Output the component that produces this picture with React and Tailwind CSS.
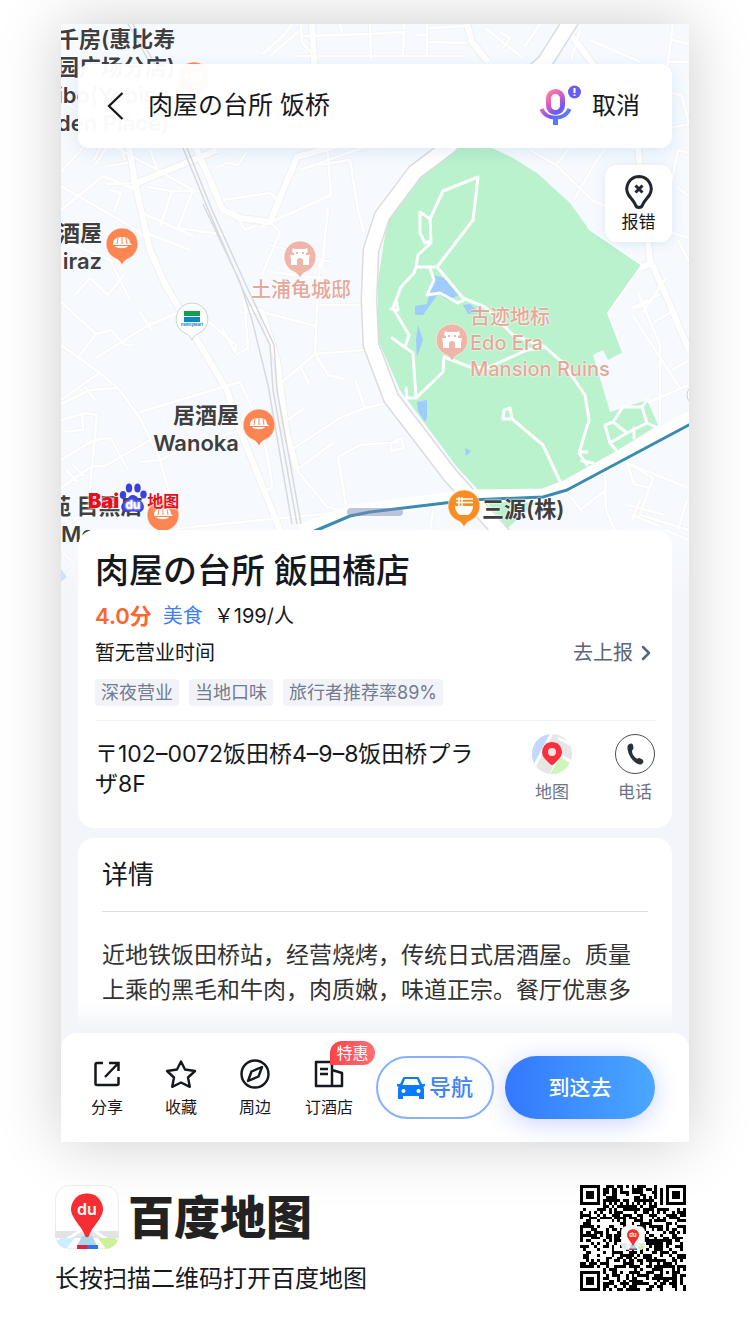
import React from 'react';
import { ChevronRight } from 'lucide-react';

// All map geometry is in one 628x576 space starting at (61, 24)
const THIN_ROADS = [
    'M61 118 L150 166 L193 190 L178 228 L226 235',
    'M61 60 L96 102 L132 70', 'M61 172 L90 140 L78 128', 'M61 186 L130 226 L150 240', 'M61 210 L103 176 L137 190',
    'M95 165 L112 140', 'M107 184 L137 183', 'M107 166 L128 163', 'M110 190 L121 193 L114 212',
    'M61 240 L110 260 L130 300', 'M76 294 L90 278 L108 295 L124 275', 'M96 358 L147 326 L180 312 L200 310',
    'M61 302 L96 334 L78 358 M96 334 L111 330 L125 345 L132 345', 'M61 345 L101 374 L118 388 L140 418 L160 460 L180 530',
    'M61 400 L98 374', 'M61 404 L90 390 L118 388 M85 387 L97 402', 'M61 420 L85 413 L97 415 L92 466 L105 466 L150 440',
    'M61 432 L83 430 L82 413 M61 460 L94 440 M61 488 L92 466 M66 470 L78 482 M72 464 L84 476 M94 440 L110 438',
    'M92 466 L88 510 L61 530', 'M140 412 L180 400 L240 382 M222 328 L235 352 L236 345 L207 320', 'M139 311 L153 332',
    'M236 355 L248 348 L244 300', 'M240 382 L262 430 L270 470 L272 488 L266 490', 'M110 437 L128 470 M140 462 L160 460 L200 442 L240 430',
    'M148 187 L172 191 L160 227 M172 191 L200 191', 'M140 212 L193 236 M144 232 L190 250', 'M223 200 L270 193 L280 202',
    'M270 222 L280 232 L262 275', 'M327 145 L331 195 L260 227', 'M217 167 L227 163 L238 165 L247 152', 'M233 210 L245 230 L255 226',
    'M318 165 L350 160 L358 210 L364 233', 'M300 170 L370 145 L430 140', 'M328 207 L322 268', 'M270 245 L330 262 M320 260 L317 305',
    'M270 272 L322 278 M262 285 L300 292', 'M243 312 L262 312 L316 326', 'M319 305 L360 305', 'M317 305 L315 354 L364 350 M315 354 L281 383',
    'M315 354 L328 375 L344 379 M300 366 L309 383', 'M355 380 L365 408 L382 404 L399 402', 'M365 408 L340 418 L288 452 M288 420 L304 408',
    'M399 442 L360 445 L338 457 L346 505 M297 470 L333 443', 'M297 470 L327 507 L350 512', 'M391 443 L401 438 L404 448 L391 451 Z',
    'M262 54 L284 35 L292 24 M270 56 L300 30', 'M293 56 L467 56', 'M301 24 L302 42 L317 60', 'M302 36 L370 34 L404 32 L403 56',
    'M340 24 L342 33 M370 24 L371 60 M404 24 L404 30', 'M427 24 L427 56 M417 35 L427 35 M429 42 L467 43 M429 28 L467 26',
    'M485 28 L523 58 M500 32 L510 38 L503 48', 'M540 24 L525 46', 'M580 30 L571 60 M590 40 L640 62', 'M673 24 L668 62 L689 62 M672 40 L689 44',
    'M668 62 L664 90 L682 96 L689 125', 'M670 128 L689 124', 'M530 150 L556 165 L592 200 L630 218 M574 200 L592 168 L604 150', 'M556 165 L568 150',
    'M61 74 L61 100 L110 128 L94 160', 'M150 150 L158 170 M118 140 L125 160', 'M672 180 L678 150 L689 153 M678 188 L689 196',
    'M664 230 L689 238 M678 240 L689 262', 'M633 316 L680 388 M643 312 L666 278 M637 308 L660 294 M654 322 L675 310',
    'M638 293 L660 345 L660 425 M648 300 L632 308', 'M645 404 L689 385 M672 370 L689 360', 'M627 463 L634 484 L650 488 L653 478 L627 463 L689 488',
    'M653 478 L640 515 L689 530', 'M615 530 L606 510 L605 490 M604 470 L606 490 L580 510', 'M628 505 L665 515 M632 515 L660 526 M640 500 L632 520',
    'M687 500 L678 530 M665 530 L689 540', 'M61 550 L75 565 L61 585', 'M430 530 L435 500', 'M160 530 L345 512', 'M572 498 L582 512',
];

const MID_ROADS = [
    'M128 140 L135 183 L150 250 L165 284 L193 333 L227 390 L240 430 L280 530',
    'M137 183 L217 150', 'M196 148 L223 210 L240 218 L270 222 L297 157 L350 142', 'M246 308 L262 312 L277 360 L286 430 L297 470',
    'M467 24 L472 42 L488 62', 'M572 36 L612 90 L638 148 L650 260 L668 300 L689 350', 'M312 24 L314 60 L312 90', 'M640 268 L654 262',
];

const RAILS = [
    'M128 24 L150 63 L183 148 L207 207 L243 290 L270 345 L273 390 L297 524',
    'M133 24 L154 63 L187 148 L212 210 L246 285 L274 345 L277 390 L301 524',
    'M203 204 L240 282 L252 320 L268 385 L292 524',
];

const PARK_PATHS = [
    'M478 177 L443 191 L430 219 L420 212 L420 233 L425 243 L431 241 L430 219',
    'M478 177 L473 220 L437 267 L416 267 L418 255 L431 243', 'M416 267 L414 273 L401 287 L393 308 L409 335 L405 347 M396 300 L398 310 L391 309',
    'M430 268 L434 280 L427 295 L440 293 L458 303 L466 299', 'M437 267 L463 298 L485 307 L513 335 L545 347 L563 363 L585 395 L589 420 L579 453 L587 465 M582 452 L587 452 M582 461 L593 463',
    'M392 338 L413 353 L416 398 L407 398 L406 388 M416 398 L443 372 L444 357 L470 367 L487 368 L527 350 L545 347',
    'M563 488 L543 445 L512 419 L510 408 L504 410 L503 419 L512 419', 'M605 425 L613 422 L623 407 L642 407 L647 423 L627 433 L613 422 M605 425 L610 443 L627 433 M610 443 L616 450 M634 428 L634 438 M642 407 L647 400 M647 423 L658 428',
];

const DARK_LABEL = 'absolute whitespace-nowrap text-[22px] leading-[28px] font-semibold text-[#3f3f3f] [text-shadow:0_0_2px_#fff,0_0_2px_#fff]';
const PINK_LABEL = 'absolute whitespace-nowrap text-[20px] leading-[26px] font-medium text-[#e6a799] [text-shadow:0_0_2px_#fff,0_0_2px_#fff]';

const Pin = ({ kind, className }) => {
    const fill = kind === 'landmark' ? '#efb5a8' : kind === 'noodle' ? '#fb8c22' : kind === 'shop' ? '#fff' : '#fd8552';
    return (
        <svg viewBox="0 0 34 40" className={`absolute h-10 w-[34px] ${className}`} aria-hidden="true">
            <path
                d="M17 1 A16 16 0 0 1 22.5 32 C20 33 18.5 35 17 38 C15.500 35 14 33 11.500 32 A16 16 0 0 1 17 1 Z"
                fill={fill}
                stroke={kind === 'shop' ? '#cfd0d2' : '#fff'}
                strokeOpacity={kind === 'shop' ? 1 : 0.5}
            />
            {kind === 'food' && (
                <g>
                    <path d="M8 17 C8 12 12 10 17 10 C22 10 25 12 25 16 L27 18 L8 18 Z" fill="#fff" />
                    <path d="M13 11 L12 17 M17 10 L17 17 M21 11 L22 17" stroke="#fd8552" fill="none" />
                    <path d="M10 19 H23 C21 22 12 22 10 19 Z" fill="#fff" />
                </g>
            )}
            {kind === 'landmark' && (
                <path d="M10 8 L12 9 H22 L24 8 L25 12 L23 13 V15 L27 15 L26 19 V25 H20 V21 A3 3 0 0 0 14 21 V25 H8 V19 L7 15 L11 15 V13 L9 12 Z M13 12 V14 H15 V12 Z M19 12 V14 H21 V12 Z" fill="#fff" fillRule="evenodd" />
            )}
            {kind === 'noodle' && (
                <g fill="none" stroke="#fff">
                    <path d="M8 17 H26 C26 21 24 24 21 26 H13 C10 24 8 21 8 17 Z" fill="#fff" stroke="none" />
                    <path d="M9 10 H26 M9 13.500 H26 M12 8 V17 M15 8 V17" strokeWidth="1.500" />
                </g>
            )}
            {kind === 'shop' && (
                <g>
                    <rect x="9" y="9" width="16" height="5" fill="#13a04a" />
                    <rect x="9" y="15" width="16" height="5" fill="#0a86c8" />
                    <text x="17" y="24" textAnchor="middle" fontSize="4" fontWeight="700" fill="#0a86c8">FamilyMart</text>
                </g>
            )}
        </svg>
    );
};

const MapCanvas = () => (
    <svg viewBox="61 24 628 576" preserveAspectRatio="xMidYMin slice" className="absolute inset-x-0 top-0 h-[576px] w-full" aria-hidden="true">
        <defs>
            <linearGradient id="mapFade" x1="0" y1="0" x2="0" y2="1">
                <stop offset="0" stopColor="#f4f5fa" stopOpacity="0" />
                <stop offset="1" stopColor="#f4f5fa" />
            </linearGradient>
        </defs>
        <rect x="61" y="24" width="628" height="576" fill="#f6faff" />
        <g fill="none" strokeLinejoin="round">
            <path d={THIN_ROADS.join(' ')} stroke="#f1f3f6" strokeWidth="4" />
            <path d={MID_ROADS.join(' ')} stroke="#eef0f3" strokeWidth="8" />
            <path d={THIN_ROADS.join(' ')} stroke="#fff" strokeWidth="2.500" />
            <path d={MID_ROADS.join(' ')} stroke="#fff" strokeWidth="6" />
            <path d={RAILS.join(' ')} stroke="#d8d9dc" strokeWidth="1.500" />
        </g>
        <path
            d="M460 148 L492 148 L513 158 L537 173 L570 203 L588 228 L642 265 L608 313 L623 352 L608 360 L603 350 L593 355 L610 412 L647 400 L658 425 L613 453 L563 488 L540 496 L485 497 L457 467 L400 390 L378 340 L378 280 L387 223 L410 180 Z"
            fill="#b9f2cc"
        />
        <path d="M485 500 L535 503 L508 528 Z" fill="#b9f2cc" />
        <path d="M588 228 L642 265 L608 313 L623 352" fill="none" stroke="#fff" strokeWidth="2" />
        <path
            d="M433 275 L448 279 L459 295 L448 300 L438 294 L423 315 L415 315 L415 306 L427 304 Z M463 305 L470 304 L480 313 L468 314 Z M418 325 L423 340 L417 357 L416 340 Z M417 402 L427 400 L427 418 L425 422 L418 411 Z M465 448 L471 451 L466 456 Z"
            fill="#9fcbfd"
        />
        <path d={PARK_PATHS.join(' ')} fill="none" stroke="#fff" strokeWidth="3" strokeLinejoin="round" strokeLinecap="round" />
        <g fill="none" strokeLinejoin="round">
            <path d="M574 16 L545 62 L447 148 L415 172 L382 216 L371 250 L369 300 L371 345 L391 398 L450 475 L504 536" stroke="#dcdcde" strokeWidth="17" />
            <path d="M574 16 L545 62 L447 148 L415 172 L382 216 L371 250 L369 300 L371 345 L391 398 L450 475 L504 536" stroke="#fff" strokeWidth="14" />
            <path d="M300 531 L350 512 L470 496 L543 495 L567 486 L700 412" stroke="#fff" strokeWidth="13" />
            <path d="M310 533 L350 516 L370 512 L470 500 L543 497 L567 490 L700 419" stroke="#3a8bb0" strokeWidth="3" />
        </g>
        <circle cx="697" cy="395" r="10" fill="#fff" stroke="#cfcfd2" />
        <rect x="61" y="540" width="628" height="60" fill="url(#mapFade)" />
        <path d="M61 569 L67 577 L61 582 Z" fill="#cfe2fa" />
    </svg>
);

const MapLabels = () => (
    <div className="absolute inset-x-0 top-0 h-[518px] overflow-hidden">
        <p className={`${DARK_LABEL} -left-1 top-px`}>
            千房(惠比寿<br />园广场分店)<br />ibo(Yebisu<br />den Place)
        </p>
        <Pin kind="food" className="left-[116px] top-[37px]" />
        <p className={`${DARK_LABEL} -left-[59px] top-[195px] w-[100px] text-right`}>酒屋<br />iraz</p>
        <Pin kind="food" className="left-11 top-[203px]" />
        <Pin kind="landmark" className="left-[222px] top-[216px]" />
        <p className={`${PINK_LABEL} left-[190px] top-[253px]`}>土浦龟城邸</p>
        <Pin kind="shop" className="left-[114px] top-[278px]" />
        <Pin kind="landmark" className="left-[374px] top-[299px]" />
        <p className={`${PINK_LABEL} left-[409px] top-[280px]`}>古迹地标<br />Edo Era<br />Mansion Ruins</p>
        <p className={`${DARK_LABEL} left-[78px] top-[377px] w-[100px] text-right`}>居酒屋<br />Wanoka</p>
        <Pin kind="food" className="left-[181px] top-[384px]" />
        <Pin kind="noodle" className="left-[386px] top-[465px]" />
        <p className={`${DARK_LABEL} left-[421px] top-[471px]`}>三源(株)</p>
        <p className={`${DARK_LABEL} -left-3 top-[468px]`}>苑 目黑店<br /><span className="pl-3">Meguro</span></p>
        <Pin kind="food" className="left-[85px] top-[474px]" />
    </div>
);

const BackIcon = () => (
    <svg viewBox="0 0 18 30" className="h-[30px] w-[18px]" fill="none" stroke="#15181d" strokeWidth="2.300" aria-hidden="true">
        <path d="M16.500 2 L3 15 L16.500 28" />
    </svg>
);

const MicIcon = () => (
    <svg viewBox="0 0 44 44" className="h-11 w-11" aria-hidden="true">
        <defs>
            <linearGradient id="mic" x1="4" y1="6" x2="30" y2="36" gradientUnits="userSpaceOnUse">
                <stop offset="0" stopColor="#ff9a7a" />
                <stop offset="0.350" stopColor="#e65fc0" />
                <stop offset="0.650" stopColor="#7258f2" />
                <stop offset="1" stopColor="#4a94ff" />
            </linearGradient>
        </defs>
        <g fill="none" stroke="url(#mic)">
            <rect x="10.500" y="7.500" width="14" height="21" rx="7" strokeWidth="5" />
            <path d="M3.500 25 C8 36.500 27 36.500 31.500 25" strokeWidth="4" />
        </g>
        <rect x="15" y="34" width="5" height="7" fill="#5a78fa" />
        <circle cx="36.500" cy="8" r="6.500" fill="#6a5cf0" />
        <path d="M36.500 4 V9 M36.500 10.500 V12" stroke="#fff" strokeWidth="2" />
    </svg>
);

const BaiduLogo = () => (
    <div className="flex items-end text-[#e50f1c] [text-shadow:0_0_2px_#fff,0_0_3px_#fff]">
        <span className="text-[20px] leading-[24px] font-black">Bai</span>
        <svg viewBox="0 0 28 30" className="h-[30px] w-7" aria-hidden="true">
            <g fill="#3a3fe0">
                <ellipse cx="4" cy="12" rx="3.200" ry="4" />
                <ellipse cx="10" cy="5" rx="3.200" ry="4.500" />
                <ellipse cx="18.500" cy="5" rx="3.200" ry="4.500" />
                <ellipse cx="24.500" cy="11.500" rx="3.200" ry="4" />
                <path d="M14 12 C18 12 19 16 22 18 C26 21 26 28 21 29 C18 29.500 16 28.500 14 28.500 C12 28.500 9 29.500 6 29 C1 27 1 21 6 18 C9 16 10 12 14 12 Z" />
            </g>
            <text x="14" y="26" textAnchor="middle" fontSize="12" fontWeight="600" fill="#fff">du</text>
        </svg>
        <span className="text-[16px] leading-[24px] font-bold">地图</span>
    </div>
);

const ReportIcon = () => (
    <svg viewBox="0 0 28 34" className="h-[34px] w-7" fill="none" stroke="#22262e" strokeWidth="3" aria-hidden="true">
        <path d="M14 1.500 A12.300 12.300 0 0 1 24.500 20 C21.500 24 18.500 27 17.500 30 C16.500 33.300 11.500 33.300 10.500 30 C9.500 27 6.500 24 3.500 20 A12.300 12.300 0 0 1 14 1.500 Z" />
        <path d="M10.500 10.500 L17.500 17.500 M17.500 10.500 L10.500 17.500" />
    </svg>
);

const MapCircleIcon = () => (
    <svg viewBox="0 0 40 40" className="h-10 w-10" aria-hidden="true">
        <clipPath id="round"><circle cx="20" cy="20" r="20" /></clipPath>
        <g clipPath="url(#round)">
            <rect width="40" height="40" fill="#e6e6e8" />
            <path d="M0 0 H19 L3 31 H0 Z" fill="#c3d8fc" />
            <path d="M20 -1 L2 33 M28 22 L18 42 M27 20 L42 30 M26 4 L42 12" stroke="#fff" strokeWidth="3" fill="none" />
            <path d="M28 24 L40 31 V40 H18 Z" fill="#cdf7b8" />
        </g>
        <path d="M20 8 A10 10 0 0 1 27 25 L22 30 Q20 32 18 30 L13 25 A10 10 0 0 1 20 8 Z" fill="#f8303c" />
        <circle cx="20" cy="18" r="4" fill="#fde3e3" />
    </svg>
);

const PhoneCircleIcon = () => (
    <svg viewBox="0 0 40 40" className="h-10 w-10" aria-hidden="true">
        <circle cx="20" cy="20" r="19.500" fill="#fff" stroke="#4a4d52" />
        <path d="M13 11 C15 9 17 9 18 11 L18.500 14 C18.500 15.500 17 16 17 17 C17 20 19 22.500 21.500 24.500 C22.500 25 23.500 24 24.500 24 L27.500 25.500 C29 27 28.500 28.500 27 30 C25 31 23 30.500 21 29 C16 25.500 13 20 12.500 14.500 C12.300 13 12.500 12 13 11 Z" fill="#2a3138" />
    </svg>
);

const ShareIcon = () => (
    <svg viewBox="0 0 28 28" className="h-7 w-7" fill="none" stroke="#15181d" strokeWidth="2.500" aria-hidden="true">
        <path d="M10 3 H4 Q2.500 3 2.500 4.500 V23.500 Q2.500 25 4 25 H24 Q25.500 25 25.500 23.500 V17 M16 3 H25.500 V11 M25 3.500 L12 17" />
    </svg>
);

const StarIcon = () => (
    <svg viewBox="0 0 32 30" className="h-[30px] w-8" fill="none" stroke="#15181d" strokeWidth="2.400" strokeLinejoin="round" aria-hidden="true">
        <path d="M16 2.500 L20 10.500 L30 12 L23 18.500 L24.800 27.800 L16 23.500 L7.200 27.800 L9 18.500 L2 12 L12 10.500 Z" />
    </svg>
);

const CompassIcon = () => (
    <svg viewBox="0 0 30 30" className="h-[30px] w-[30px]" fill="none" stroke="#15181d" strokeWidth="2.400" strokeLinejoin="round" aria-hidden="true">
        <circle cx="15" cy="15" r="13.500" />
        <path d="M22 8 L18.500 17.500 L8 22 L11.500 12.500 Z" />
    </svg>
);

const HotelIcon = () => (
    <svg viewBox="0 0 30 28" className="h-7 w-[30px]" fill="none" stroke="#15181d" strokeWidth="2.500" strokeLinejoin="round" aria-hidden="true">
        <path d="M18 26 H2 V2 H18 Z M18 10 L28 13 V26 H18 M6 9 H14 M6 14 H14" />
    </svg>
);

const CarIcon = () => (
    <svg viewBox="0 0 28 24" className="h-6 w-7" aria-hidden="true">
        <path d="M6.500 1 H21.500 L25 8 H28 V10 L26.500 11 L27 13 V23 H22 V20 H6 V23 H1 V13 L1.500 11 L0 10 V8 H3 Z M8 3 L5.500 9 H22.500 L20 3 Z M6.500 13 A2 2 0 1 0 6.510 13 Z M21.500 13 A2 2 0 1 0 21.510 13 Z" fill="#0a7bff" fillRule="evenodd" />
    </svg>
);

const AppLogo = ({ className }) => (
    <svg viewBox="0 0 64 64" className={className} aria-hidden="true">
        <clipPath id="tile"><rect width="64" height="64" rx="14" /></clipPath>
        <rect x="0.500" y="0.500" width="63" height="63" rx="14" fill="#fff" stroke="#ececec" />
        <g clipPath="url(#tile)">
            <path d="M0 46 H64 V53 H0 Z" fill="#e3e3e5" />
            <path d="M28 44 L0 62 M36 44 L64 62" stroke="#fff" strokeWidth="3" />
            <path d="M6 53 H20 L11 64 H0 V57 Z" fill="#cdeefc" />
            <path d="M43 53 H60 L64 57 L56 64 H51 Z" fill="#cdf09b" />
            <path d="M27 51 H37 L42 61 H22 Z" fill="#a9d8ec" />
            <path d="M22 60 H32 V64 H22 Z" fill="#e0213f" />
            <path d="M32 60 H43 V64 H32 Z" fill="#2f74e8" />
        </g>
        <path d="M32 8.500 A15.500 15.500 0 0 1 45 33 C41 40 36 44 34 51 Q32 53.500 30 51 C28 44 23 40 19 33 A15.500 15.500 0 0 1 32 8.500 Z" fill="#f62d33" />
        <text x="32" y="30" textAnchor="middle" fontSize="16" fontWeight="600" fill="#fff">du</text>
    </svg>
);

const QR_SIZE = 37;

const finderCell = (x, y) => {
    const ring = Math.max(Math.abs(x - 3), Math.abs(y - 3));
    return ring === 3 || ring <= 1;
};

const isDark = (x, y) => {
    const far = QR_SIZE - 8;
    if (x < 8 && y < 8) return x < 7 && y < 7 && finderCell(x, y);
    if (x >= far && y < 8) return x > far && y < 7 && finderCell(x - far - 1, y);
    if (x < 8 && y >= far) return x < 7 && y > far && finderCell(x, y - far - 1);
    if (Math.abs(x - 30) <= 2 && Math.abs(y - 30) <= 2) return Math.max(Math.abs(x - 30), Math.abs(y - 30)) !== 1;
    if (x === 6 || y === 6) return (x + y) % 2 === 0;
    const n = Math.sin(x * 12.9898 + y * 78.233) * 43758.5453;
    return n - Math.floor(n) > 0.48;
};

const QrCode = () => {
    let d = '';
    for (let y = 0; y < QR_SIZE; y++) {
        for (let x = 0; x < QR_SIZE; x++) {
            if (isDark(x, y)) d += `M${x} ${y}h1v1h-1z`;
        }
    }
    return (
        <div className="grid h-[106px] w-[106px] place-items-center">
            <svg viewBox="0 0 37 37" className="col-start-1 row-start-1 h-full w-full" shapeRendering="crispEdges" role="img" aria-label="二维码">
                <path d={d} fill="#000" />
            </svg>
            <AppLogo className="z-10 col-start-1 row-start-1 h-6 w-6" />
        </div>
    );
};

const TAGS = ['深夜营业', '当地口味', '旅行者推荐率89%'];

const ACTIONS = [
    { label: '分享', icon: <ShareIcon /> },
    { label: '收藏', icon: <StarIcon /> },
    { label: '周边', icon: <CompassIcon /> },
    { label: '订酒店', icon: <HotelIcon />, badge: '特惠' },
];

const App = () => {
    return (
        <div className="min-h-screen bg-white font-['Inter','Noto_Sans_CJK_SC',sans-serif] text-[#15181d]">
            <main className="mx-[61px] pt-6">
                <div className="relative bg-[#f4f5fa] shadow-[0_0_60px_rgba(0,0,0,0.2)]">
                    <div className="absolute inset-0 overflow-hidden">
                        <MapCanvas />
                        <MapLabels />
                    </div>

                    {/* Controls over the map */}
                    <section className="relative flex h-[506px] flex-col px-[17px] pt-10 pb-[17px]">
                        <form className="flex h-[84px] items-center rounded-xl bg-white/97 pr-8 pl-7 shadow-[0_4px_16px_rgba(60,100,160,0.12)]" onSubmit={(e) => e.preventDefault()}>
                            <button type="button" aria-label="返回">
                                <BackIcon />
                            </button>
                            <input
                                aria-label="搜索"
                                defaultValue="肉屋の台所 饭桥"
                                className="ml-6 min-w-0 flex-1 bg-transparent text-[25px] outline-none"
                            />
                            <button type="button" aria-label="语音" className="mr-[10px]"><MicIcon /></button>
                            <button type="button" className="text-[24px]">取消</button>
                        </form>

                        <button type="button" className="mt-[17px] flex h-[77px] w-[67px] flex-col items-center justify-center gap-[3px] self-end rounded-xl bg-white/95 text-[17px] leading-5 shadow-[0_2px_12px_rgba(60,100,160,0.12)]">
                            <ReportIcon />
                            报错
                        </button>

                        <div className="mt-auto pl-[10px]"><BaiduLogo /></div>
                        <div className="absolute bottom-[14px] left-1/2 h-2 w-14 -translate-x-1/2 rounded-full bg-[#7c8cb4]/50" />
                    </section>

                    {/* Place summary */}
                    <div className="relative flex flex-col gap-[10px] px-[17px]">
                        <section className="h-[298px] rounded-2xl bg-white px-[17px] pt-4">
                            <h1 className="text-[34px] leading-[50px] font-medium">肉屋の台所 飯田橋店</h1>
                            <div className="mt-1 flex h-8 items-center text-[20px] leading-8">
                                <span className="text-[22px] font-semibold text-[#fb6633]">4.0分</span>
                                <a href="#food" className="ml-[11px] text-[#3f7ff5]">美食</a>
                                <span className="ml-[11px]">￥199/人</span>
                            </div>
                            <div className="mt-[5px] flex h-8 items-center justify-between text-[20px]">
                                <span>暂无营业时间</span>
                                <a href="#report" className="flex items-center gap-px text-[#5c6478]">
                                    去上报
                                    <ChevronRight size={24} strokeWidth={2.5} className="-mr-[3px]" />
                                </a>
                            </div>
                            <ul className="mt-[10px] flex gap-[10px]">
                                {TAGS.map((tag) => (
                                    <li key={tag} className="h-[27px] rounded-sm bg-[#f1f3f8] px-[6px] text-[18px] leading-[28px] text-[#737b8e]">{tag}</li>
                                ))}
                            </ul>
                            <div className="mt-[14px] flex border-t border-[#f0f0f2] pt-[13px]">
                                <p className="mt-[5px] w-[400px] text-[23px] leading-[30px]">〒102–0072饭田桥4–9–8饭田桥プラザ8F</p>
                                <div className="ml-auto flex gap-[43px] text-[17px] leading-[22px] text-[#6b7386]">
                                    <button type="button" className="flex flex-col items-center gap-[7px]"><MapCircleIcon />地图</button>
                                    <button type="button" className="flex flex-col items-center gap-[7px]"><PhoneCircleIcon />电话</button>
                                </div>
                            </div>
                        </section>

                        <section className="h-[195px] overflow-hidden rounded-t-2xl bg-linear-to-b from-white from-85% to-[#f1f3f6] px-6">
                            <h2 className="border-b border-[#dedede] pt-[17px] pb-4 text-[26px] leading-10">详情</h2>
                            <p className="mt-[26px] text-[23px] leading-[35px] text-[#333]">
                                近地铁饭田桥站，经营烧烤，传统日式居酒屋。质量<br />
                                上乘的黑毛和牛肉，肉质嫩，味道正宗。餐厅优惠多
                            </p>
                        </section>
                    </div>

                    {/* Bottom actions */}
                    <nav className="relative flex h-[109px] items-center rounded-t-2xl bg-white pr-[34px] pl-[9px]">
                        <div className="flex flex-1">
                            {ACTIONS.map(({ label, icon, badge }) => (
                                <button key={label} type="button" className="relative flex flex-1 flex-col items-center text-[16px] leading-6">
                                    <span className="flex h-9 items-center">{icon}</span>
                                    <span className="mt-[3px]">{label}</span>
                                    {badge && (
                                        <span className="absolute -top-[15px] left-[38px] w-[45px] rounded-full rounded-bl-none bg-linear-to-r from-[#fd4049] to-[#ff6e74] text-center text-[16px] leading-6 text-white">
                                            {badge}
                                        </span>
                                    )}
                                </button>
                            ))}
                        </div>
                        <button type="button" className="ml-[10px] flex h-[63px] w-[118px] items-center justify-center gap-1 rounded-full border-2 border-[#86b2fb] text-[22px] font-medium text-[#3d82f7]">
                            <CarIcon />
                            导航
                        </button>
                        <button type="button" className="ml-[11px] h-[63px] w-[150px] rounded-full bg-linear-to-r from-[#3478ff] to-[#4ba7ff] text-[21px] font-medium text-white shadow-[0_4px_24px_rgba(80,110,255,0.3)]">
                            到这去
                        </button>
                    </nav>
                </div>
            </main>

            <footer className="relative flex items-start justify-between pt-[43px] pr-16 pb-10 pl-[55px]">
                <div>
                    <div className="flex items-center gap-[9px]">
                        <AppLogo className="h-16 w-16" />
                        <span className="text-[46px] leading-[64px] font-black text-[#222]">百度地图</span>
                    </div>
                    <p className="mt-3 text-[24px] leading-9">长按扫描二维码打开百度地图</p>
                </div>
                <QrCode />
            </footer>
        </div>
    );
};

export default App;
